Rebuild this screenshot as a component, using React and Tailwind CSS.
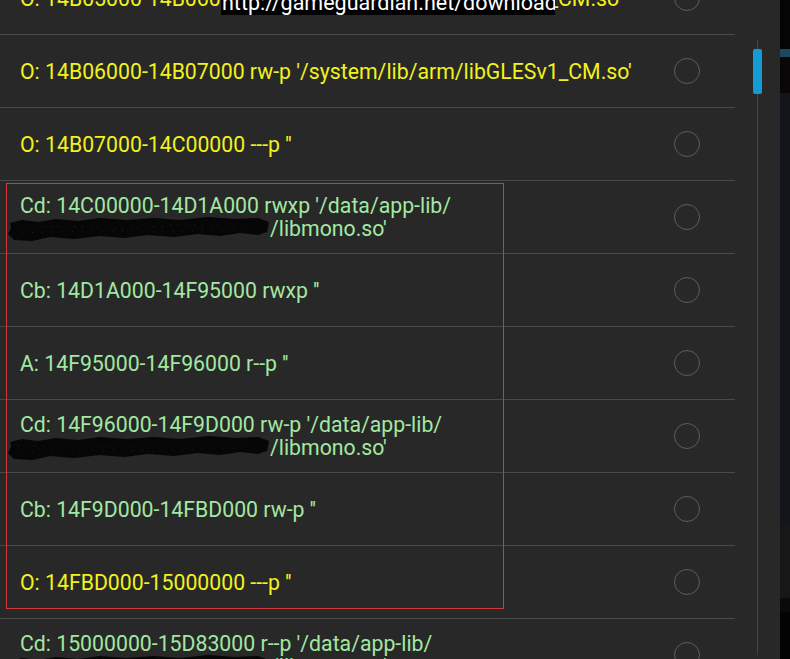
import React from 'react';

const YELLOW = 'text-[#f2f21c]';
const GREEN = 'text-[#a2e8a2]';

const rows = [
  { color: YELLOW, lines: ["O: 14B05000-14B06000 r--p '/system/lib/arm/libGLESv1_CM.so'"] },
  { color: YELLOW, lines: ["O: 14B06000-14B07000 rw-p '/system/lib/arm/libGLESv1_CM.so'"] },
  { color: YELLOW, lines: ["O: 14B07000-14C00000 ---p ''"] },
  { color: GREEN, lines: ["Cd: 14C00000-14D1A000 rwxp '/data/app-lib/"], hidden: "/libmono.so'" },
  { color: GREEN, lines: ["Cb: 14D1A000-14F95000 rwxp ''"] },
  { color: GREEN, lines: ["A: 14F95000-14F96000 r--p ''"] },
  { color: GREEN, lines: ["Cd: 14F96000-14F9D000 rw-p '/data/app-lib/"], hidden: "/libmono.so'" },
  { color: GREEN, lines: ["Cb: 14F9D000-14FBD000 rw-p ''"] },
  { color: YELLOW, lines: ["O: 14FBD000-15000000 ---p ''"] },
  { color: GREEN, lines: ["Cd: 15000000-15D83000 r--p '/data/app-lib/"], hidden: "/libmono.so'" },
];

// black marker scribble hiding the package name
const Scribble = () => (
  <svg width="262" height="26" viewBox="0 0 262 26" className="shrink-0">
    <path
      d="M2 7 L14 4 L30 6 L48 3 L70 5 L92 2 L118 4 L146 2 L172 4 L200 1 L228 3 L250 2 L261 6 L259 16 L250 19 L232 17 L212 20 L190 18 L166 21 L140 19 L116 22 L92 20 L66 23 L42 21 L24 25 L6 24 L0 18 L3 12 Z"
      fill="#060606"
    />
    <path d="M10 11 L60 10 L110 13 L170 9 L240 10" stroke="#222" strokeWidth="1" strokeDasharray="1 7" fill="none" />
    <path d="M14 17 L80 15 L150 16 L230 13" stroke="#1e1e1e" strokeWidth="1" strokeDasharray="1 9" fill="none" />
  </svg>
);

const Row = ({ row }) => (
  <div className="flex h-[73px] shrink-0 items-center border-b border-[#4a4a4a]">
    <div className={`flex-1 pl-[20px] text-[21.25px] leading-[23px] ${row.color}`}>
      {row.lines.map((l) => (
        <div key={l} className="whitespace-pre">{l}</div>
      ))}
      {row.hidden && (
        <div className="-ml-[12px] flex h-[23px] items-center">
          <Scribble />
          <span className="whitespace-pre">{row.hidden}</span>
        </div>
      )}
    </div>
    <div className="mr-[35px] h-[26px] w-[26px] rounded-full border-[1.5px] border-[#5c5c5c]" />
  </div>
);

export default function App() {
  return (
    <div
      className="relative flex h-[659px] w-[790px] overflow-hidden bg-[#282828]"
      style={{ fontFamily: 'Roboto, "Noto Sans", sans-serif' }}
    >
      {/* memory region list, scrolled */}
      <div className="-mt-[38px] flex w-[735px] shrink-0 flex-col">
        {rows.map((r, i) => (
          <Row key={i} row={r} />
        ))}
      </div>

      {/* scroll track */}
      <div className="flex w-[45px] shrink-0 pt-[40px] pl-[22px]">
        <div className="relative h-[615px] w-px bg-[#454545]">
          <div className="absolute top-[9px] -left-[4px] h-[45px] w-[9px] rounded-[2px] bg-[#139bd6]" />
        </div>
      </div>

      {/* edge of window behind */}
      <div className="flex w-[10px] shrink-0 flex-col">
        <div className="h-[49px] bg-[#050505]" />
        <div className="h-[8px] bg-[#1c4a5c]" />
        <div className="h-[36px] bg-[#0b0708]" />
        <div className="h-[432px] bg-[#12161a]" />
        <div className="h-[73px] bg-[#171717]" />
        <div className="h-[14px] bg-[#0a0a0a]" />
        <div className="flex-1 bg-[#030303]" />
      </div>

      {/* watermark */}
      <div className="absolute left-[221px] top-0 h-[15px] w-[334px] overflow-hidden bg-black">
        <div className="-mt-[8px] pl-px text-[21.5px] leading-[22px] text-white whitespace-pre">http://gameguardian.net/download</div>
      </div>

      {/* selection highlight */}
      <div className="pointer-events-none absolute left-[6px] top-[183px] h-[426px] w-[498px] border border-[#d23a3a]" />
    </div>
  );
}
